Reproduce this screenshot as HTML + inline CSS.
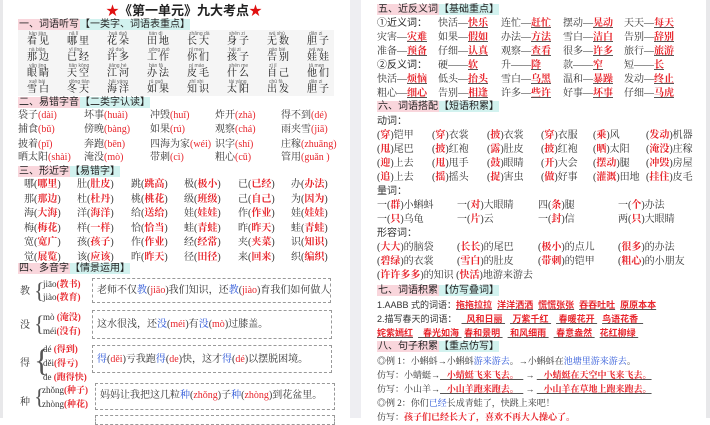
<!DOCTYPE html>
<html><head><meta charset="utf-8"><style>
*{margin:0;padding:0;box-sizing:border-box}
body{width:710px;height:418px;overflow:hidden;background:#fff;position:relative;font-family:"Liberation Serif","Noto Serif CJK SC","Noto Sans CJK SC",serif;font-size:10px;color:#333}
.a{position:absolute;white-space:nowrap;line-height:12px}
.r{color:#e8262d}
.rb{color:#e8262d;font-weight:bold}
.b{color:#2a55d8}
.u{color:#e8262d;font-weight:bold;text-decoration:underline;text-decoration-color:#555}
.h{position:absolute;height:12px;line-height:12px;font-family:"Liberation Sans","Noto Sans CJK SC",sans-serif;font-size:10px;color:#222;white-space:nowrap}
.h .p{background:#f9d6dc;padding:0 1px}
.h .c{background:#d2f2ef}
.py{position:absolute;font-size:5px;color:#666;line-height:6px;font-family:"Liberation Sans",sans-serif;white-space:nowrap}
.box{position:absolute;border:1px dashed #999}
.s{font-family:"Liberation Sans","Noto Sans CJK SC",sans-serif}
.sm{font-size:9px}
.lb{font-size:9px}
</style></head><body>
<div style="position:absolute;left:0;top:0;width:3px;height:418px;background:#e8e8ea"></div>
<div style="position:absolute;left:350px;top:0;width:11px;height:418px;background:#eeeef2"></div>
<div style="position:absolute;left:706px;top:0;width:4px;height:418px;background:#e8e8ea"></div>

<div class="a s" style="left:106px;top:3px;font-size:13px;line-height:15px;font-weight:bold;color:#222"><span style="color:#e01010">★</span>《第一单元》九大考点<span style="color:#e01010">★</span></div>
<div class="h" style="left:18px;top:19px"><span class="p">一、词语听写</span><span class="c">【一类字、词语表重点】</span></div>
<div style="position:absolute;left:18px;top:30px;width:316px;height:66px;background:#f5f5f5"></div>
<div id="grid"></div>
<div class="h" style="left:18px;top:97px"><span class="p">二、易错字音</span><span class="c">【二类字认读】</span></div>
<div class="a" style="left:18px;top:110px">袋子<span class="r">(dài)</span></div><div class="a" style="left:84px;top:110px">坏事<span class="r">(huài)</span></div><div class="a" style="left:150px;top:110px">冲毁<span class="r">(huǐ)</span></div><div class="a" style="left:215px;top:110px">炸开<span class="r">(zhà)</span></div><div class="a" style="left:281px;top:110px">得不到<span class="r">(dé)</span></div>
<div class="a" style="left:18px;top:124px">捕食<span class="r">(bǔ)</span></div><div class="a" style="left:84px;top:124px">傍晚<span class="r">(bàng)</span></div><div class="a" style="left:150px;top:124px">如果<span class="r">(rú)</span></div><div class="a" style="left:215px;top:124px">观察<span class="r">(chá)</span></div><div class="a" style="left:281px;top:124px">雨夹雪<span class="r">(jiā)</span></div>
<div class="a" style="left:18px;top:139px">披着<span class="r">(pī)</span></div><div class="a" style="left:84px;top:139px">奔跑<span class="r">(bēn)</span></div><div class="a" style="left:150px;top:139px">四海为家<span class="r">(wéi)</span></div><div class="a" style="left:215px;top:139px">识字<span class="r">(shí)</span></div><div class="a" style="left:281px;top:139px">庄稼<span class="r">(zhuāng)</span></div>
<div class="a" style="left:18px;top:152px">晒太阳<span class="r">(shài)</span></div><div class="a" style="left:84px;top:152px">淹没<span class="r">(mò)</span></div><div class="a" style="left:150px;top:152px">带刺<span class="r">(cì)</span></div><div class="a" style="left:215px;top:152px">粗心<span class="r">(cū)</span></div><div class="a" style="left:281px;top:152px">管用<span class="r">(guǎn )</span></div>
<div class="h" style="left:18px;top:166px"><span class="p">三、形近字</span><span class="c">【易错字】</span></div>
<div id="xj"></div>
<div class="h" style="left:18px;top:263px"><span class="p">四、多音字</span><span class="c">【情景运用】</span></div>

<div class="box" style="left:92px;top:278px;width:239px;height:25px"></div>
<div class="a" style="left:20px;top:286px">教</div><div class="a" style="left:34px;top:279px;font-size:22px;line-height:24px;color:#555">{</div>
<div class="a lb" style="left:43px;top:278px">jiāo<span class="rb">(教书)</span></div><div class="a lb" style="left:43px;top:291px">jiào<span class="rb">(教育)</span></div>
<div class="a" style="left:97px;top:285px">老师不仅<span class="b">教</span>(<span class="r">jiāo</span>)我们知识，还<span class="b">教</span>(<span class="r">jiào</span>)育我们如何做人</div>

<div class="box" style="left:92px;top:310px;width:240px;height:29px"></div>
<div class="a" style="left:20px;top:320px">没</div><div class="a" style="left:34px;top:312px;font-size:22px;line-height:24px;color:#555">{</div>
<div class="a lb" style="left:43px;top:311px">mò <span class="rb">(淹没)</span></div><div class="a lb" style="left:43px;top:325px">méi<span class="rb">(没有)</span></div>
<div class="a" style="left:97px;top:319px">这水很浅，还<span class="b">没</span>(<span class="r">méi</span>)有<span class="b">没</span>(<span class="r">mò</span>)过膝盖。</div>

<div class="box" style="left:92px;top:345px;width:240px;height:28px"></div>
<div class="a" style="left:20px;top:358px">得</div><div class="a" style="left:34px;top:343px;font-size:32px;line-height:34px;color:#555">{</div>
<div class="a lb" style="left:43px;top:343px">dé <span class="rb">(得到)</span></div><div class="a lb" style="left:43px;top:357px">děi<span class="rb">(得亏)</span></div><div class="a lb" style="left:43px;top:371px">de <span class="rb">(跑得快)</span></div>
<div class="a" style="left:97px;top:354px"><span class="b">得</span>(<span class="r">děi</span>)亏我跑<span class="b">得</span>(<span class="r">de</span>)快，这才<span class="b">得</span>(<span class="r">dé</span>)以摆脱困境。</div>

<div class="box" style="left:95px;top:383px;width:240px;height:27px"></div>
<div class="a" style="left:20px;top:397px">种</div><div class="a" style="left:34px;top:385px;font-size:22px;line-height:24px;color:#555">{</div>
<div class="a lb" style="left:42px;top:384px">zhǒng<span class="rb">(种子)</span></div><div class="a lb" style="left:42px;top:398px">zhòng<span class="rb">(种花)</span></div>
<div class="a" style="left:100px;top:390px">妈妈让我把这几粒<span class="b">种</span>(<span class="r">zhǒng</span>)子<span class="b">种</span>(<span class="r">zhòng</span>)到花盆里。</div>
<div class="box" style="left:95px;top:415px;width:240px;height:10px"></div>

<div class="h" style="left:377px;top:4px"><span class="p">五、近反义词</span><span class="c">【基础重点】</span></div>
<div id="jf"></div>
<div class="h" style="left:377px;top:101px"><span class="p">六、词语搭配</span><span class="c">【短语积累】</span></div>
<div class="a s" style="left:377px;top:116px">动词：</div>
<div id="dc"></div>
<div class="a s" style="left:377px;top:186px">量词：</div>
<div class="a s" style="left:377px;top:228px">形容词：</div>
<div class="h" style="left:377px;top:285px"><span class="p">七、词语积累</span><span class="c">【仿写叠词】</span></div>
<div class="a s sm" style="left:377px;top:299px">1.AABB 式的词语：<span class="u">拖拖拉拉</span>&nbsp; <span class="u">洋洋洒洒</span>&nbsp; <span class="u">慌慌张张</span>&nbsp; <span class="u">吞吞吐吐</span>&nbsp; <span class="u">原原本本</span></div>
<div class="a s sm" style="left:377px;top:313px">2.描写春天的词语：&nbsp;&nbsp;<span class="u">&nbsp;&nbsp;风和日丽&nbsp;</span>&nbsp; <span class="u">&nbsp;万紫千红&nbsp;</span>&nbsp; <span class="u">&nbsp;春暖花开&nbsp;</span>&nbsp; <span class="u">鸟语花香&nbsp;&nbsp;</span></div>
<div class="a s sm" style="left:377px;top:327px"><span class="u">姹紫嫣红</span>&nbsp;&nbsp;<span class="u">&nbsp;&nbsp;春光如海&nbsp;</span>&nbsp;<span class="u">春和景明&nbsp;</span>&nbsp; <span class="u">&nbsp;和风细雨&nbsp;</span>&nbsp; <span class="u">&nbsp;春意盎然&nbsp;</span>&nbsp; <span class="u">花红柳绿&nbsp;</span></div>
<div class="h" style="left:377px;top:341px"><span class="p">八、句子积累</span><span class="c">【重点仿写】</span></div>
<div class="a sm" style="left:377px;top:355px">◎例 1：小蝌蚪→小蝌蚪<span class="b">游来游去</span>。→小蝌蚪在<span class="b">池塘里游来游去</span>。</div>
<div class="a sm" style="left:377px;top:369px">仿写：小蜻蜓→<span class="u">&nbsp;&nbsp;&nbsp;小蜻蜓飞来飞去。&nbsp;&nbsp;</span> → <span class="u">&nbsp;&nbsp;&nbsp;小蜻蜓在天空中飞来飞去。</span></div>
<div class="a sm" style="left:377px;top:383px">仿写：小山羊→<span class="u">&nbsp;&nbsp;&nbsp;小山羊跑来跑去。&nbsp;&nbsp;</span> → <span class="u">&nbsp;&nbsp;&nbsp;小山羊在草地上跑来跑去。</span></div>
<div class="a sm" style="left:377px;top:397px">◎例 2：你们<span class="b">已经</span>长成青蛙了，快跳上来吧！</div>
<div class="a sm" style="left:377px;top:411px">仿写：<span class="rb">孩子们已经长大了，喜欢不再大人操心了。</span></div>

<script>
function add(id,html){document.getElementById(id).insertAdjacentHTML('beforeend',html)}
var g=[[["kàn jiàn","看见"],["nǎ lǐ","哪里"],["huā duǒ","花朵"],["tián dì","田地"],["zhǎng dà","长大"],["shēn zi","身子"],["wú shù","无数"],["dǎn zi","胆子"]],
[["nà biān","那边"],["yǐ jīng","已经"],["xǔ duō","许多"],["gōng zuò","工作"],["nǐ men","你们"],["hái zi","孩子"],["gào bié","告别"],["wá wa","娃娃"]],
[["yǎn jing","眼睛"],["tiān kōng","天空"],["jiāng hé","江河"],["bàn fǎ","办法"],["pí máo","皮毛"],["shén me","什么"],["zì jǐ","自己"],["tā men","他们"]],
[["xuě bái","雪白"],["dōng tiān","冬天"],["hǎi yáng","海洋"],["rú guǒ","如果"],["zhī shi","知识"],["tài yáng","太阳"],["chū fā","出发"],["dǎn zi","胆子"]]];
var s='';g.forEach(function(r,i){r.forEach(function(c,j){var x=27+j*40,y=31+i*16;s+='<div class="py" style="left:'+(x+2)+'px;top:'+y+'px">'+c[0]+'</div><div class="a" style="left:'+x+'px;top:'+(y+5)+'px;color:#111;letter-spacing:2px">'+c[1]+'</div>'})});add('grid',s);
var x=[["哪","哪里","肚","肚皮","跳","跳高","极","极小","已","已经","办","办法"],["那","那边","杜","杜丹","桃","桃花","级","班级","己","自己","为","因为"],["海","大海","洋","海洋","给","送给","娃","娃娃","作","作业","娃","娃娃"],["梅","梅花","样","一样","恰","恰当","蛙","青蛙","昨","昨天","蛙","青蛙"],["宽","宽广","孩","孩子","作","作业","经","经常","夹","夹菜","识","知识"],["觉","展览","该","应该","昨","昨天","径","田径","来","回来","织","编织"]];
var xs=[24,77,131,184,238,291];s='';x.forEach(function(r,i){for(var j=0;j<6;j++){s+='<div class="a" style="left:'+xs[j]+'px;top:'+(179+i*14.5)+'px">'+r[j*2]+'(<span class="rb">'+r[j*2+1]+'</span>)</div>'}});add('xj',s);
var jf=[["①近义词：","快活","快乐","连忙","赶忙","摆动","晃动","天天","每天"],["灾害","灾难","如果","假如","办法","方法","雪白","洁白","告别","辞别"],["准备","预备","仔细","认真","观察","查看","很多","许多","旅行","旅游"],["②反义词：","硬","软","升","降","款","窄","短","长"],["快活","烦恼","低头","抬头","雪白","乌黑","温和","暴躁","发动","终止"],["粗心","细心","告别","相逢","许多","些许","好事","坏事","仔细","马虎"]];
var js=[377,438,501,563,624];s='';jf.forEach(function(r,i){var y=18+i*14;var k=0;for(var j=0;j<5;j++){if(r[k].indexOf('义词')>0){s+='<div class="a s" style="left:377px;top:'+y+'px;color:#222">'+r[k]+'</div>';k++;continue}var dash=(i==3)?'——':'—';s+='<div class="a" style="left:'+js[j]+'px;top:'+y+'px">'+r[k]+dash+'<span class="u">'+r[k+1]+'</span></div>';k+=2}});add('jf',s);
var dc=[["穿","铠甲","穿","衣裳","披","衣裳","穿","衣服","乘","风","发动","机器"],["甩","尾巴","披","红袍","露","肚皮","披","红袍","晒","太阳","淹没","庄稼"],["迎","上去","甩","甩手","鼓","眼睛","开","大会","摆动","腿","冲毁","房屋"],["追","上去","摇","摇头","捉","害虫","做","好事","灌溉","田地","挂住","皮毛"]];
var ds=[377,432,487,541,593,646];s='';dc.forEach(function(r,i){for(var j=0;j<6;j++)s+='<div class="a" style="left:'+ds[j]+'px;top:'+(130+i*14)+'px">(<span class="rb">'+r[j*2]+'</span>)'+r[j*2+1]+'</div>'});
var lc=[["一","群","小蝌蚪","一","对","大眼睛","四","条","腿","一","个","办法"],["一","只","乌龟","一","片","云","一","封","信","两","只","大眼睛"]];
var ls=[377,457,538,618];lc.forEach(function(r,i){for(var j=0;j<4;j++)s+='<div class="a" style="left:'+ls[j]+'px;top:'+(200+i*14)+'px">'+r[j*3]+'(<span class="rb">'+r[j*3+1]+'</span>)'+r[j*3+2]+'</div>'});
var xr=[["大大","的脑袋","长长","的尾巴","极小","的点儿","很多","的办法"],["碧绿","的衣裳","雪白","的肚皮","带刺","的铠甲","粗心","的小朋友"]];
xr.forEach(function(r,i){for(var j=0;j<4;j++)s+='<div class="a" style="left:'+ls[j]+'px;top:'+(242+i*14)+'px">(<span class="rb">'+r[j*2]+'</span>)'+r[j*2+1]+'</div>'});
s+='<div class="a" style="left:377px;top:270px">(<span class="rb">许许多多</span>)的知识 (<span class="rb">快活</span>)地游来游去</div>';
add('dc',s);
</script>
</body></html>
